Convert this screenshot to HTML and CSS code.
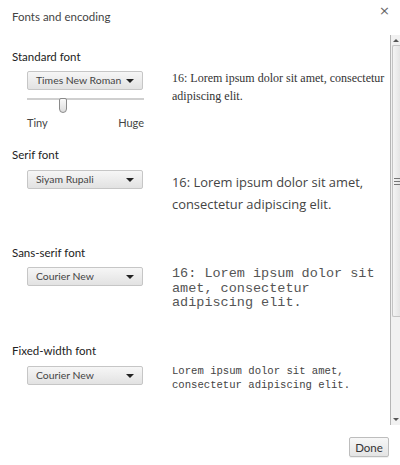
FILE: index.html
```html
<!DOCTYPE html>
<html lang="en">
<head>
    <meta charset="UTF-8">
    <meta name="viewport" content="width=device-width, initial-scale=1.0">
    <title>Fonts and encoding</title>
    <link rel="stylesheet" href="styles.css">
</head>
<body>
    <div class="dialog">
        <div class="header">
            <span class="title">Fonts and encoding</span>
            <span class="close">&#215;</span>
        </div>
        <div class="body">
            <div class="content">
                <div class="section first">
                    <div class="label">Standard font</div>
                    <div class="row">
                        <div class="controls">
                            <div class="select">Times New Roman<span class="arrow"></span></div>
                            <div class="slider">
                                <div class="track"></div>
                                <div class="thumb"></div>
                            </div>
                            <div class="scale"><span>Tiny</span><span>Huge</span></div>
                        </div>
                        <div class="sample serif">16: Lorem ipsum dolor sit amet, consectetur adipiscing elit.</div>
                    </div>
                </div>
                <div class="section second">
                    <div class="label">Serif font</div>
                    <div class="row">
                        <div class="controls">
                            <div class="select">Siyam Rupali<span class="arrow"></span></div>
                        </div>
                        <div class="sample rupali">16: Lorem ipsum dolor sit amet, consectetur adipiscing elit.</div>
                    </div>
                </div>
                <div class="section third">
                    <div class="label">Sans-serif font</div>
                    <div class="row">
                        <div class="controls">
                            <div class="select">Courier New<span class="arrow"></span></div>
                        </div>
                        <div class="sample mono-big">16: Lorem ipsum dolor sit amet, consectetur adipiscing elit.</div>
                    </div>
                </div>
                <div class="section fourth">
                    <div class="label">Fixed-width font</div>
                    <div class="row">
                        <div class="controls">
                            <div class="select">Courier New<span class="arrow"></span></div>
                        </div>
                        <div class="sample mono-small">Lorem ipsum dolor sit amet, consectetur adipiscing elit.</div>
                    </div>
                </div>
            </div>
            <div class="scrollbar">
                <div class="sb-arrow up"></div>
                <div class="sb-thumb"><div class="grip"></div></div>
                <div class="sb-rest"></div>
                <div class="sb-arrow down"></div>
            </div>
        </div>
        <div class="footer">
            <button class="done">Done</button>
        </div>
    </div>
</body>
</html>
```

FILE: styles.css
```css
body {
    margin: 0;
    background-color: #fff;
    font-family: Lato, "Open Sans", sans-serif;
    color: #333;
}
.dialog {
    width: 400px;
    height: 465px;
    display: flex;
    flex-direction: column;
    overflow: hidden;
}
.header {
    height: 35px;
    display: flex;
    justify-content: space-between;
    align-items: flex-start;
    padding: 0 10px 0 12px;
    box-sizing: border-box;
}
.title {
    font-size: 11.5px;
    line-height: 14px;
    margin-top: 10px;
    color: #444;
}
.close {
    font-size: 13px;
    line-height: 13px;
    margin-top: 4px;
    color: #666;
    font-family: "DejaVu Sans", sans-serif;
}
.body {
    height: 390px;
    display: flex;
}
.content {
    flex: 1;
    padding: 15px 0 0 12px;
}
.section {
    height: 98px;
}
.section.fourth {
    height: auto;
}
.label {
    font-size: 11.5px;
    line-height: 14px;
    color: #222;
    margin-bottom: 7px;
}
.second .label,
.fourth .label {
    margin-bottom: 8px;
}
.row {
    display: flex;
}
.controls {
    width: 145px;
    padding-left: 15px;
}
.select {
    width: 116px;
    height: 19px;
    box-sizing: border-box;
    border: 1px solid #c6c6c6;
    border-radius: 2px;
    background: linear-gradient(#f6f6f6, #e2e2e2);
    font-size: 10.4px;
    line-height: 17px;
    padding-left: 8px;
    color: #444;
    position: relative;
}
.arrow {
    position: absolute;
    right: 8px;
    top: 7px;
    border-left: 4px solid transparent;
    border-right: 4px solid transparent;
    border-top: 4px solid #222;
}
.slider {
    position: relative;
    height: 16px;
    margin-top: 8px;
    width: 117px;
}
.track {
    height: 2px;
    background: #cfcfcf;
    margin-top: 8px;
}
.thumb {
    position: absolute;
    left: 32px;
    top: 0;
    width: 6px;
    height: 13px;
    border: 1px solid #8a8a8a;
    border-radius: 2px 2px 4px 4px;
    background: linear-gradient(#fafafa, #dcdcdc);
}
.scale {
    display: flex;
    justify-content: space-between;
    width: 117px;
    font-size: 11px;
    line-height: 14px;
    margin-top: 2px;
    color: #444;
}
.sample {
    flex: 1;
    color: #333;
}
.serif {
    font-family: "Liberation Serif", serif;
    font-size: 12px;
    line-height: 18px;
    margin-top: -2px;
}
.rupali {
    font-family: "Open Sans", "Noto Sans", sans-serif;
    font-size: 12.9px;
    line-height: 22px;
    margin-top: 1px;
    color: #444;
}
.mono-big {
    font-family: "Liberation Mono", monospace;
    font-size: 13.5px;
    line-height: 14.5px;
    color: #555;
}
.mono-small {
    font-family: "Liberation Mono", monospace;
    font-size: 10.6px;
    line-height: 14px;
    margin-top: -2px;
    color: #444;
}
.scrollbar {
    width: 9px;
    display: flex;
    flex-direction: column;
    background: #f1f1f1;
    border-left: 1px solid #b5b5b5;
}
.sb-arrow {
    height: 10px;
    position: relative;
}
.sb-arrow.up::after,
.sb-arrow.down::after {
    content: "";
    position: absolute;
    left: 2px;
    border-left: 3px solid transparent;
    border-right: 3px solid transparent;
}
.sb-arrow.up::after {
    top: 4px;
    border-bottom: 3px solid #555;
}
.sb-arrow.down::after {
    top: 3px;
    border-top: 3px solid #555;
}
.sb-thumb {
    height: 270px;
    margin-left: 1px;
    border: 1px solid #c4c4c4;
    border-right: none;
    border-radius: 2px 0 0 2px;
    background: linear-gradient(to right, #f4f4f4, #e4e4e4);
    display: flex;
    align-items: center;
    justify-content: center;
}
.grip {
    width: 6px;
    height: 5px;
    border-top: 1px solid #777;
    border-bottom: 1px solid #777;
    position: relative;
}
.grip::after {
    content: "";
    position: absolute;
    left: 0;
    right: 0;
    top: 2px;
    border-top: 1px solid #777;
}
.sb-rest {
    flex: 1;
}
.footer {
    flex: 1;
    display: flex;
    justify-content: flex-end;
    align-items: flex-start;
    padding: 12px 11px 0 0;
}
.done {
    width: 40px;
    height: 20px;
    border: 1px solid #bdbdbd;
    border-radius: 2px;
    background: linear-gradient(#f7f7f7, #e4e4e4);
    font-family: Lato, "Open Sans", sans-serif;
    font-size: 11.5px;
    color: #333;
    padding: 0;
    box-shadow: 0 1px 0 rgba(0, 0, 0, 0.06);
}
```
